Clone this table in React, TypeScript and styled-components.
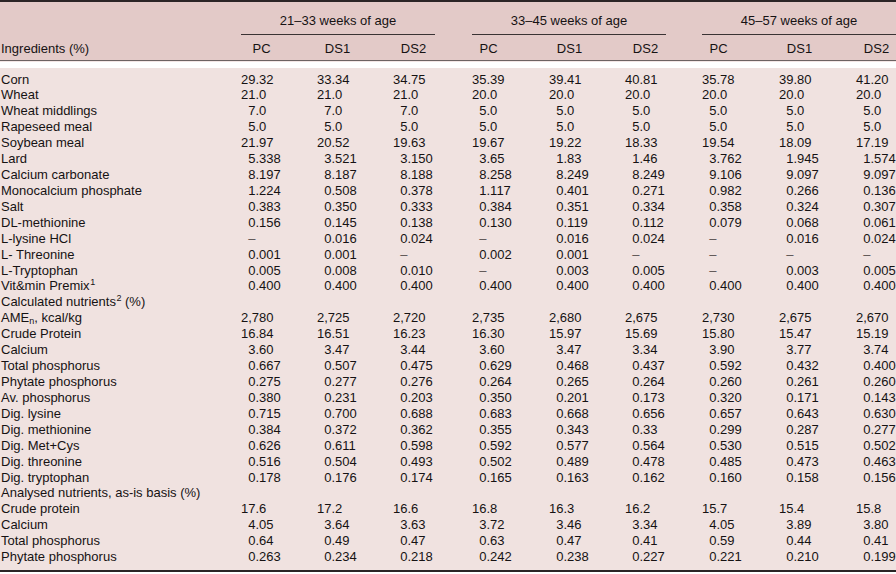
import React from 'react'
import styled, { createGlobalStyle } from 'styled-components'

const GlobalStyle = createGlobalStyle`
  html, body {
    margin: 0;
    padding: 0;
    background: #ffffff;
  }
  body {
    font-family: "Liberation Sans", Arial, sans-serif;
    font-size: 13px;
    color: #161213;
  }
`

// label column + nine value columns (three age groups of PC / DS1 / DS2)
const COLS = '241px 76px 76px 79px 77px 76px 77px 77px 77px 40px'

const Table = styled.div`
  width: 896px;
  border-top: 2px solid #2b2526;
  border-bottom: 2px solid #2b2526;
`

const Head = styled.div`
  background: #e3cac8;
  padding: 11px 0 4px;
  border-bottom: 1px solid #6d6262;
`

const GroupRow = styled.div`
  display: grid;
  grid-template-columns: ${COLS};
`

const GroupHead = styled.div<{ $trim: number }>`
  grid-column: span 3;
  margin-right: ${(p) => p.$trim}px;
  text-align: center;
  line-height: 15px;
  padding-bottom: 5.5px;
  border-bottom: 1px solid #3a3334;
`

const LabelRow = styled.div`
  display: grid;
  grid-template-columns: ${COLS};
  line-height: 15px;
  margin-top: 6.5px;
`

const HeadCell = styled.div<{ $w: number }>`
  width: ${(p) => p.$w}px;
  text-align: center;
`

const Gap = styled.div`
  height: 6px;
  background: #ffffff;
  border-top: 1px solid #f3e6e5;
`

const Body = styled.div`
  background: #f0e2e0;
  padding: 3.5px 0 4.7px;
`

const Row = styled.div`
  display: grid;
  grid-template-columns: ${COLS};
  height: 15.93px;
  line-height: 15.93px;
  white-space: nowrap;
`

const Label = styled.div`
  padding-left: 1px;
`

const Value = styled.div`
  display: flex;
`

const Int = styled.span`
  display: inline-block;
  width: 14.5px;
  text-align: right;
`

const Dash = styled.span`
  color: #5a5252;
`

const Sup = styled.sup`
  font-size: 9px;
  line-height: 0;
  vertical-align: 5px;
  margin-left: 0.5px;
`

const Sub = styled.sub`
  font-size: 9px;
  line-height: 0;
  vertical-align: -2px;
`

type Line = { label: React.ReactNode; values?: string[] }

const rows: Line[] = [
  { label: 'Corn', values: ['29.32', '33.34', '34.75', '35.39', '39.41', '40.81', '35.78', '39.80', '41.20'] },
  { label: 'Wheat', values: ['21.0', '21.0', '21.0', '20.0', '20.0', '20.0', '20.0', '20.0', '20.0'] },
  { label: 'Wheat middlings', values: ['7.0', '7.0', '7.0', '5.0', '5.0', '5.0', '5.0', '5.0', '5.0'] },
  { label: 'Rapeseed meal', values: ['5.0', '5.0', '5.0', '5.0', '5.0', '5.0', '5.0', '5.0', '5.0'] },
  { label: 'Soybean meal', values: ['21.97', '20.52', '19.63', '19.67', '19.22', '18.33', '19.54', '18.09', '17.19'] },
  { label: 'Lard', values: ['5.338', '3.521', '3.150', '3.65', '1.83', '1.46', '3.762', '1.945', '1.574'] },
  { label: 'Calcium carbonate', values: ['8.197', '8.187', '8.188', '8.258', '8.249', '8.249', '9.106', '9.097', '9.097'] },
  { label: 'Monocalcium phosphate', values: ['1.224', '0.508', '0.378', '1.117', '0.401', '0.271', '0.982', '0.266', '0.136'] },
  { label: 'Salt', values: ['0.383', '0.350', '0.333', '0.384', '0.351', '0.334', '0.358', '0.324', '0.307'] },
  { label: 'DL-methionine', values: ['0.156', '0.145', '0.138', '0.130', '0.119', '0.112', '0.079', '0.068', '0.061'] },
  { label: 'L-lysine HCl', values: ['–', '0.016', '0.024', '–', '0.016', '0.024', '–', '0.016', '0.024'] },
  { label: 'L- Threonine', values: ['0.001', '0.001', '–', '0.002', '0.001', '–', '–', '–', '–'] },
  { label: 'L-Tryptophan', values: ['0.005', '0.008', '0.010', '–', '0.003', '0.005', '–', '0.003', '0.005'] },
  { label: <>Vit&amp;min Premix<Sup>1</Sup></>, values: ['0.400', '0.400', '0.400', '0.400', '0.400', '0.400', '0.400', '0.400', '0.400'] },
  { label: <>Calculated nutrients<Sup>2</Sup> (%)</> },
  { label: <>AME<Sub>n</Sub>, kcal/kg</>, values: ['2,780', '2,725', '2,720', '2,735', '2,680', '2,675', '2,730', '2,675', '2,670'] },
  { label: 'Crude Protein', values: ['16.84', '16.51', '16.23', '16.30', '15.97', '15.69', '15.80', '15.47', '15.19'] },
  { label: 'Calcium', values: ['3.60', '3.47', '3.44', '3.60', '3.47', '3.34', '3.90', '3.77', '3.74'] },
  { label: 'Total phosphorus', values: ['0.667', '0.507', '0.475', '0.629', '0.468', '0.437', '0.592', '0.432', '0.400'] },
  { label: 'Phytate phosphorus', values: ['0.275', '0.277', '0.276', '0.264', '0.265', '0.264', '0.260', '0.261', '0.260'] },
  { label: 'Av. phosphorus', values: ['0.380', '0.231', '0.203', '0.350', '0.201', '0.173', '0.320', '0.171', '0.143'] },
  { label: 'Dig. lysine', values: ['0.715', '0.700', '0.688', '0.683', '0.668', '0.656', '0.657', '0.643', '0.630'] },
  { label: 'Dig. methionine', values: ['0.384', '0.372', '0.362', '0.355', '0.343', '0.33', '0.299', '0.287', '0.277'] },
  { label: 'Dig. Met+Cys', values: ['0.626', '0.611', '0.598', '0.592', '0.577', '0.564', '0.530', '0.515', '0.502'] },
  { label: 'Dig. threonine', values: ['0.516', '0.504', '0.493', '0.502', '0.489', '0.478', '0.485', '0.473', '0.463'] },
  { label: 'Dig. tryptophan', values: ['0.178', '0.176', '0.174', '0.165', '0.163', '0.162', '0.160', '0.158', '0.156'] },
  { label: 'Analysed nutrients, as-is basis (%)' },
  { label: 'Crude protein', values: ['17.6', '17.2', '16.6', '16.8', '16.3', '16.2', '15.7', '15.4', '15.8'] },
  { label: 'Calcium', values: ['4.05', '3.64', '3.63', '3.72', '3.46', '3.34', '4.05', '3.89', '3.80'] },
  { label: 'Total phosphorus', values: ['0.64', '0.49', '0.47', '0.63', '0.47', '0.41', '0.59', '0.44', '0.41'] },
  { label: 'Phytate phosphorus', values: ['0.263', '0.234', '0.218', '0.242', '0.238', '0.227', '0.221', '0.210', '0.199'] },
]

const groups = [
  { title: '21–33 weeks of age', trim: 37, pc: 41 },
  { title: '33–45 weeks of age', trim: 36, pc: 33 },
  { title: '45–57 weeks of age', trim: 0, pc: 33 },
]

// align on the decimal point; dashes sit in the integer slot, "2,780" style values start flush
const Num: React.FC<{ v: string }> = ({ v }) => {
  if (v === '–') return <Value><Int><Dash>{v}</Dash></Int></Value>
  const dot = v.indexOf('.')
  if (dot < 0) return <Value>{v}</Value>
  return (
    <Value>
      <Int>{v.slice(0, dot)}</Int>
      {v.slice(dot)}
    </Value>
  )
}

const App: React.FC = () => {
  return (
    <>
      <GlobalStyle />
      <Table>
        <Head>
          <GroupRow>
            <div />
            {groups.map((g) => (
              <GroupHead key={g.title} $trim={g.trim}>{g.title}</GroupHead>
            ))}
          </GroupRow>
          <LabelRow>
            <Label>Ingredients (%)</Label>
            {groups.map((g) =>
              ['PC', 'DS1', 'DS2'].map((c) => (
                <HeadCell key={g.title + c} $w={c === 'PC' ? g.pc : 41}>{c}</HeadCell>
              ))
            )}
          </LabelRow>
        </Head>
        <Gap />
        <Body>
          {rows.map((r, i) => (
            <Row key={i}>
              <Label>{r.label}</Label>
              {r.values?.map((v, j) => <Num key={j} v={v} />)}
            </Row>
          ))}
        </Body>
      </Table>
    </>
  )
}

export default App
